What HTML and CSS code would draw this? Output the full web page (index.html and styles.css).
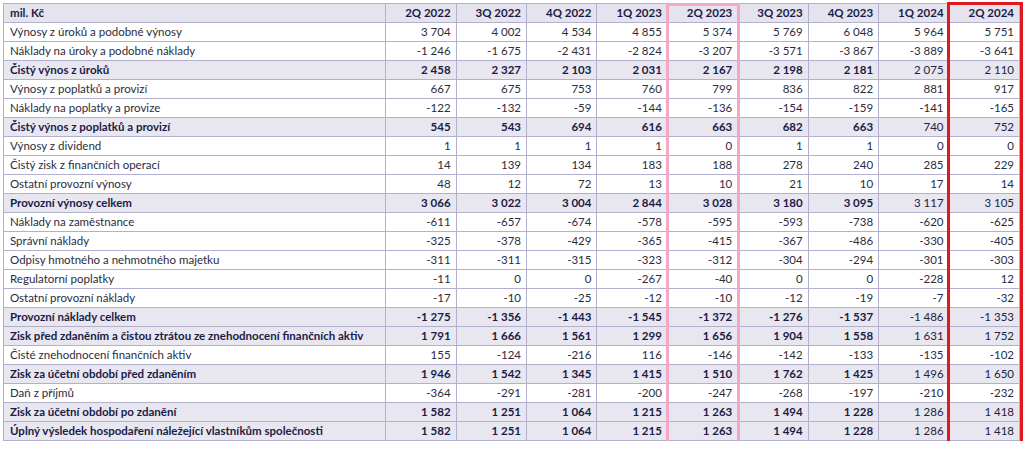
FILE: index.html
```html
<!DOCTYPE html>
<html lang="cs">
<head>
<meta charset="utf-8">
<link rel="stylesheet" href="styles.css">
</head>
<body>
<div class="wrap">
<table class="fin">
<colgroup><col class="c-label"><col><col><col><col><col><col><col><col><col></colgroup>
<thead>
<tr class="hdr"><th class="lbl">mil. Kč</th><th>2Q 2022</th><th>3Q 2022</th><th>4Q 2022</th><th>1Q 2023</th><th>2Q 2023</th><th>3Q 2023</th><th>4Q 2023</th><th>1Q 2024</th><th>2Q 2024</th></tr>
</thead>
<tbody>
<tr><td class="lbl">Výnosy z úroků a podobné výnosy</td><td>3 704</td><td>4 002</td><td>4 534</td><td>4 855</td><td>5 374</td><td>5 769</td><td>6 048</td><td>5 964</td><td>5 751</td></tr>
<tr><td class="lbl">Náklady na úroky a podobné náklady</td><td>-1 246</td><td>-1 675</td><td>-2 431</td><td>-2 824</td><td>-3 207</td><td>-3 571</td><td>-3 867</td><td>-3 889</td><td>-3 641</td></tr>
<tr class="tot"><td class="lbl">Čistý výnos z úroků</td><td>2 458</td><td>2 327</td><td>2 103</td><td>2 031</td><td>2 167</td><td>2 198</td><td>2 181</td><td>2 075</td><td>2 110</td></tr>
<tr><td class="lbl">Výnosy z poplatků a provizí</td><td>667</td><td>675</td><td>753</td><td>760</td><td>799</td><td>836</td><td>822</td><td>881</td><td>917</td></tr>
<tr><td class="lbl">Náklady na poplatky a provize</td><td>-122</td><td>-132</td><td>-59</td><td>-144</td><td>-136</td><td>-154</td><td>-159</td><td>-141</td><td>-165</td></tr>
<tr class="tot"><td class="lbl">Čistý výnos z poplatků a provizí</td><td>545</td><td>543</td><td>694</td><td>616</td><td>663</td><td>682</td><td>663</td><td>740</td><td>752</td></tr>
<tr><td class="lbl">Výnosy z dividend</td><td>1</td><td>1</td><td>1</td><td>1</td><td>0</td><td>1</td><td>1</td><td>0</td><td>0</td></tr>
<tr><td class="lbl">Čistý zisk z finančních operací</td><td>14</td><td>139</td><td>134</td><td>183</td><td>188</td><td>278</td><td>240</td><td>285</td><td>229</td></tr>
<tr><td class="lbl">Ostatní provozní výnosy</td><td>48</td><td>12</td><td>72</td><td>13</td><td>10</td><td>21</td><td>10</td><td>17</td><td>14</td></tr>
<tr class="tot"><td class="lbl">Provozní výnosy celkem</td><td>3 066</td><td>3 022</td><td>3 004</td><td>2 844</td><td>3 028</td><td>3 180</td><td>3 095</td><td>3 117</td><td>3 105</td></tr>
<tr><td class="lbl">Náklady na zaměstnance</td><td>-611</td><td>-657</td><td>-674</td><td>-578</td><td>-595</td><td>-593</td><td>-738</td><td>-620</td><td>-625</td></tr>
<tr><td class="lbl">Správní náklady</td><td>-325</td><td>-378</td><td>-429</td><td>-365</td><td>-415</td><td>-367</td><td>-486</td><td>-330</td><td>-405</td></tr>
<tr><td class="lbl">Odpisy hmotného a nehmotného majetku</td><td>-311</td><td>-311</td><td>-315</td><td>-323</td><td>-312</td><td>-304</td><td>-294</td><td>-301</td><td>-303</td></tr>
<tr><td class="lbl">Regulatorní poplatky</td><td>-11</td><td>0</td><td>0</td><td>-267</td><td>-40</td><td>0</td><td>0</td><td>-228</td><td>12</td></tr>
<tr><td class="lbl">Ostatní provozní náklady</td><td>-17</td><td>-10</td><td>-25</td><td>-12</td><td>-10</td><td>-12</td><td>-19</td><td>-7</td><td>-32</td></tr>
<tr class="tot"><td class="lbl">Provozní náklady celkem</td><td>-1 275</td><td>-1 356</td><td>-1 443</td><td>-1 545</td><td>-1 372</td><td>-1 276</td><td>-1 537</td><td>-1 486</td><td>-1 353</td></tr>
<tr class="tot"><td class="lbl">Zisk před zdaněním a čistou ztrátou ze znehodnocení finančních aktiv</td><td>1 791</td><td>1 666</td><td>1 561</td><td>1 299</td><td>1 656</td><td>1 904</td><td>1 558</td><td>1 631</td><td>1 752</td></tr>
<tr><td class="lbl">Čisté znehodnocení finančních aktiv</td><td>155</td><td>-124</td><td>-216</td><td>116</td><td>-146</td><td>-142</td><td>-133</td><td>-135</td><td>-102</td></tr>
<tr class="tot"><td class="lbl">Zisk za účetní období před zdaněním</td><td>1 946</td><td>1 542</td><td>1 345</td><td>1 415</td><td>1 510</td><td>1 762</td><td>1 425</td><td>1 496</td><td>1 650</td></tr>
<tr><td class="lbl">Daň z příjmů</td><td>-364</td><td>-291</td><td>-281</td><td>-200</td><td>-247</td><td>-268</td><td>-197</td><td>-210</td><td>-232</td></tr>
<tr class="tot"><td class="lbl">Zisk za účetní období po zdanění</td><td>1 582</td><td>1 251</td><td>1 064</td><td>1 215</td><td>1 263</td><td>1 494</td><td>1 228</td><td>1 286</td><td>1 418</td></tr>
<tr class="tot"><td class="lbl">Úplný výsledek hospodaření náležející vlastníkům společnosti</td><td>1 582</td><td>1 251</td><td>1 064</td><td>1 215</td><td>1 263</td><td>1 494</td><td>1 228</td><td>1 286</td><td>1 418</td></tr>
</tbody>
</table>
<div class="frame frame-pink"></div>
<div class="frame frame-red"></div>
</div>
</body>
</html>
```
FILE: styles.css
```css
html, body {
  margin: 0;
  padding: 0;
  background: #ffffff;
}
body {
  padding: 3px 0 0 3px;
  font-family: Lato, "Liberation Sans", sans-serif;
  font-size: 11.5px;
  color: #2c2c40;
}
.wrap {
  position: relative;
  width: 1018px;
}
.fin {
  border-collapse: collapse;
  table-layout: fixed;
  width: 1017px;
}
.fin col { width: 70.4px; }
.fin col.c-label { width: 382px; }
.fin th, .fin td {
  height: 18px;
  padding: 0 5px 0 4px;
  border: 1px solid #b3b0cf;
  text-align: right;
  white-space: nowrap;
  line-height: 18px;
  box-sizing: border-box;
}
.fin .lbl {
  text-align: left;
  padding-left: 6px;
}
.hdr th {
  background: #e4e3ee;
  color: #1b1b48;
  font-weight: 700;
}
.tot td {
  background: #e8e7f0;
  color: #1b1b48;
  font-weight: 700;
}
.tot td:nth-child(n+9) {
  font-weight: 400;
  color: #23233f;
}
.frame {
  position: absolute;
  box-sizing: border-box;
  border: 3px solid;
  pointer-events: none;
}
.frame-pink {
  left: 663px;
  top: 0;
  width: 74px;
  height: 441px;
  border-color: #f4a8c3;
}
.frame-red {
  left: 944px;
  top: -1px;
  width: 76px;
  height: 445px;
  border-color: #e0191e;
}
```
